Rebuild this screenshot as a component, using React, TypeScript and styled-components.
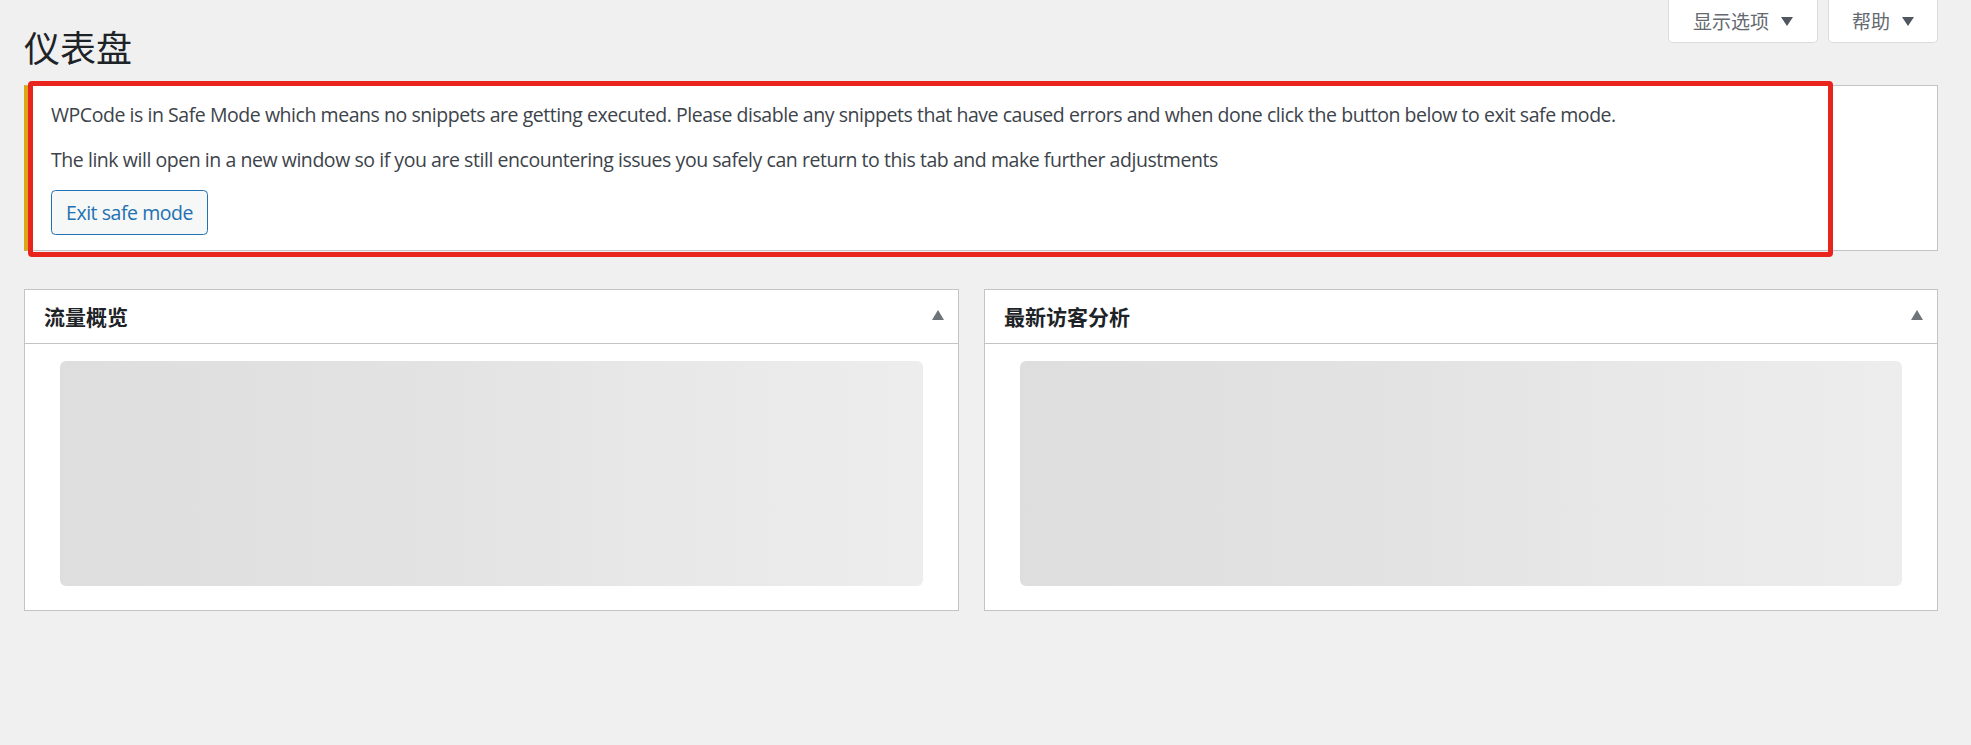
import { FC } from "react";
import styled, { createGlobalStyle } from "styled-components";

const GlobalStyle = createGlobalStyle`
    html, body {
        margin: 0;
        padding: 0;
        background: #f0f0f1;
    }
    body {
        font-family: "Open Sans", "Noto Sans CJK SC", sans-serif;
        color: #3c434a;
    }
`;

const Wrap = styled.div`
    padding: 0 33px 40px 24px;
`;

const ScreenMeta = styled.div`
    float: right;
    display: flex;
    gap: 10px;
`;

const MetaButton = styled.button<{ $width: number }>`
    -webkit-appearance: none;
    appearance: none;
    width: ${(p) => p.$width}px;
    height: 43px;
    display: flex;
    align-items: center;
    justify-content: center;
    gap: 12px;
    background: #fff;
    border: 1px solid #dcdcde;
    border-top: none;
    border-radius: 0 0 5px 5px;
    color: #646970;
    font-family: "Noto Sans CJK SC", sans-serif;
    font-size: 19px;
    padding: 0 0 2px;
    cursor: pointer;
`;

const Caret = styled.span`
    width: 0;
    height: 0;
    border-left: 6px solid transparent;
    border-right: 6px solid transparent;
    border-top: 9px solid #50575e;
    margin-top: 2px;
`;

const Title = styled.h1`
    margin: 0;
    padding-top: 23px;
    font-family: "Noto Sans CJK SC", sans-serif;
    font-size: 36px;
    font-weight: 400;
    line-height: 46px;
    color: #1d2327;
`;

const Notice = styled.div`
    position: relative;
    margin-top: 16px;
    background: #fff;
    border: 1px solid #c3c4c7;
    border-left: 6px solid #dba617;
    padding: 1.5px 18px 1.5px 21px;
`;

const NoticeText = styled.p`
    margin: 9.75px 0;
    padding: 3px 0;
    font-size: 19.5px;
    line-height: 29.25px;
    letter-spacing: -0.45px;
    color: #3c434a;
`;

const ExitButton = styled.button`
    -webkit-appearance: none;
    appearance: none;
    height: 45px;
    padding: 0 14px;
    font-family: "Open Sans", sans-serif;
    font-size: 19.5px;
    letter-spacing: -0.45px;
    color: #2271b1;
    background: #f6f7f7;
    border: 1px solid #2271b1;
    border-radius: 4.5px;
    cursor: pointer;
`;

const Annotation = styled.div`
    position: absolute;
    left: -2px;
    top: -5px;
    width: 1805px;
    height: 176px;
    box-sizing: border-box;
    border: 5px solid #e8241d;
    border-radius: 4px;
    pointer-events: none;
`;

const Columns = styled.div`
    display: grid;
    grid-template-columns: 935px 1fr;
    gap: 25px;
    margin-top: 38px;
`;

const Postbox = styled.section`
    background: #fff;
    border: 1px solid #c3c4c7;
`;

const PostboxHeader = styled.div`
    height: 53px;
    display: flex;
    align-items: center;
    justify-content: space-between;
    padding: 0 14px 0 19px;
    border-bottom: 1px solid #c3c4c7;
`;

const PostboxTitle = styled.h2`
    margin: 0;
    font-family: "Noto Sans CJK SC", sans-serif;
    font-size: 21px;
    font-weight: 700;
    color: #1d2327;
`;

const Toggle = styled.span`
    width: 0;
    height: 0;
    margin-top: -2px;
    border-left: 6px solid transparent;
    border-right: 6px solid transparent;
    border-bottom: 10px solid #6f747a;
`;

const PostboxBody = styled.div`
    padding: 17px 35px 24px;
`;

const Skeleton = styled.div`
    height: 225px;
    border-radius: 6px;
    background: linear-gradient(
        to right,
        #dedede 0%,
        #e0e0e0 20%,
        #e3e3e3 45%,
        #e8e8e8 70%,
        #ededed 100%
    );
`;

const widgets = ["流量概览", "最新访客分析"];

const App: FC = () => {
    return (
        <>
            <GlobalStyle />
            <Wrap>
                <ScreenMeta>
                    <MetaButton type="button" $width={150}>
                        显示选项 <Caret />
                    </MetaButton>
                    <MetaButton type="button" $width={110}>
                        帮助 <Caret />
                    </MetaButton>
                </ScreenMeta>
                <Title>仪表盘</Title>
                <Notice>
                    <NoticeText>
                        WPCode is in Safe Mode which means no snippets are
                        getting executed. Please disable any snippets that have
                        caused errors and when done click the button below to
                        exit safe mode.
                    </NoticeText>
                    <NoticeText>
                        The link will open in a new window so if you are still
                        encountering issues you safely can return to this tab
                        and make further adjustments
                    </NoticeText>
                    <NoticeText>
                        <ExitButton type="button">Exit safe mode</ExitButton>
                    </NoticeText>
                    <Annotation />
                </Notice>
                <Columns>
                    {widgets.map((title) => (
                        <Postbox key={title}>
                            <PostboxHeader>
                                <PostboxTitle>{title}</PostboxTitle>
                                <Toggle />
                            </PostboxHeader>
                            <PostboxBody>
                                <Skeleton />
                            </PostboxBody>
                        </Postbox>
                    ))}
                </Columns>
            </Wrap>
        </>
    );
};

export default App;
